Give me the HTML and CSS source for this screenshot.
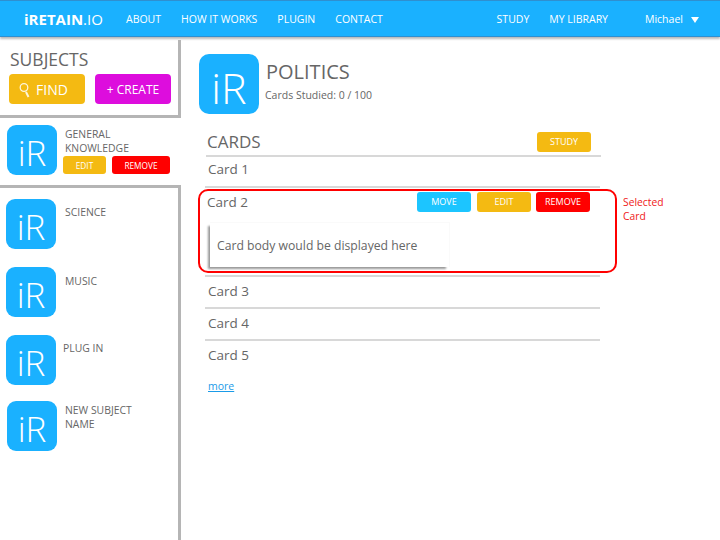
FILE: index.html
```html
<!DOCTYPE html>
<html lang="en">
<head>
    <meta charset="UTF-8">
    <title>iRetain.io</title>
    <link rel="stylesheet" href="styles.css">
</head>
<body>
    <div id="header">
        <div class="brand"><b>iRETAIN</b>.IO</div>
        <a>ABOUT</a>
        <a>HOW IT WORKS</a>
        <a>PLUGIN</a>
        <a>CONTACT</a>
        <a class="push">STUDY</a>
        <a>MY LIBRARY</a>
        <a class="user">Michael <span class="caret"></span></a>
    </div>

    <div id="page">
        <div id="sidebar">
            <div class="side-top">
                <div class="side-title">SUBJECTS</div>
                <div class="side-actions">
                    <div class="btn big yellow find">
                        <svg width="13" height="24" viewBox="0 0 13 24" fill="none" stroke="#fff" stroke-opacity=".85">
                            <circle cx="5" cy="10.5" r="3.8" stroke-width="1.3"/>
                            <path d="M7 15l2.5 5" stroke-width="2"/>
                        </svg>
                        FIND
                    </div>
                    <div class="btn big magenta">+ CREATE</div>
                </div>
            </div>

            <div class="subject current">
                <div class="logo">iR</div>
                <div class="subject-info">
                    <div class="subject-name">GENERAL<br>KNOWLEDGE</div>
                    <div class="subject-btns">
                        <div class="btn tiny yellow edit-s">EDIT</div>
                        <div class="btn tiny red remove-s">REMOVE</div>
                    </div>
                </div>
            </div>

            <div class="side-list">
                <div class="subject"><div class="logo">iR</div><div class="subject-name">SCIENCE</div></div>
                <div class="subject"><div class="logo">iR</div><div class="subject-name">MUSIC</div></div>
                <div class="subject"><div class="logo">iR</div><div class="subject-name">PLUG IN</div></div>
                <div class="subject"><div class="logo">iR</div><div class="subject-name">NEW SUBJECT<br>NAME</div></div>
            </div>
        </div>

        <div id="main">
            <div class="topic">
                <div class="logo large">iR</div>
                <div>
                    <div class="topic-name">POLITICS</div>
                    <div class="topic-stat">Cards Studied: 0 / 100</div>
                </div>
            </div>

            <div class="cards">
                <div class="cards-head">
                    <span>CARDS</span>
                    <div class="btn small yellow">STUDY</div>
                </div>
                <div class="card">Card 1</div>
                <div class="card selected">
                    <div class="card-row">
                        <span>Card 2</span>
                        <div class="card-btns">
                            <div class="btn small blue">MOVE</div>
                            <div class="btn small yellow">EDIT</div>
                            <div class="btn small red">REMOVE</div>
                        </div>
                    </div>
                    <div class="card-body">Card body would be displayed here</div>
                    <div class="note">Selected<br>Card</div>
                </div>
                <div class="card-rule"></div>
                <div class="card">Card 3</div>
                <div class="card">Card 4</div>
                <div class="card">Card 5</div>
                <a class="more">more</a>
            </div>
        </div>
    </div>
</body>
</html>
```

FILE: styles.css
```css
html, body { margin: 0; padding: 0; height: 100%; }
body { font-family: "Open Sans", sans-serif; color: #666; background: #fff; overflow: hidden; display: flex; flex-direction: column; }

#header { height: 35px; flex: none; display: flex; align-items: center; background: #1ab1ff; border-top: 1px solid #2f8fd0; border-bottom: 1px solid #2f8fd0; box-shadow: 0 2px 2px #bbb; color: #fff; padding-left: 24px; font-size: 10.5px; }
#header a { margin-right: 20px; }
#header .push { margin-left: auto; }
#header .user { margin-right: 8px; margin-left: 17px; width: 67px; }
.brand { font-size: 15px; width: 102px; }
.caret { display: inline-block; margin-left: 5px; border-left: 4px solid transparent; border-right: 4px solid transparent; border-top: 6px solid #fff; }

#page { flex: 1; display: flex; min-height: 0; padding-top: 3px; }

#sidebar { width: 181px; flex: none; display: flex; flex-direction: column; }
.side-top { height: 78px; box-sizing: border-box; padding: 8px 0 0 9px; border-right: 3px solid #b5b5b5; border-bottom: 3px solid #b5b5b5; }
.side-title { font-size: 17.5px; line-height: 22px; margin: 0 0 4px 1px; }
.side-actions { display: flex; gap: 10px; }
.side-list { flex: 1; border-top: 3px solid #b5b5b5; border-right: 3px solid #b5b5b5; padding: 11px 0 0 6px; }
.side-list .subject { margin-bottom: 18px; height: 50px; }
.side-list .subject:nth-child(2) .subject-name { margin-top: 7px; }
.side-list .subject:nth-child(3) { margin-bottom: 16px; }
.side-list .subject:nth-child(3) .subject-name { margin-left: 7px; margin-top: 6px; }
.side-list .subject:nth-child(4) { margin-left: 1px; }
.side-list .subject:nth-child(4) .subject-name { margin-left: 8px; margin-top: 2px; }

.subject { display: flex; }
.subject-name { font-size: 10.4px; line-height: 14px; margin-left: 9px; margin-top: 6px; }
.subject.current { height: 67px; box-sizing: border-box; padding: 7px 0 0 7px; }
.subject-info { margin-top: 2px; }
.subject.current .subject-name { margin-top: 0; margin-left: 8px; }
.subject-btns { display: flex; gap: 6px; margin-left: 6px; margin-top: 1px; }

.logo { width: 50px; height: 50px; border-radius: 9px; background: #1ab1ff; color: #fff; font-size: 35px; font-weight: 300; line-height: 56px; text-align: center; flex: none; }
.logo.large { width: 60px; height: 60px; border-radius: 10px; font-size: 43px; line-height: 68px; }

.btn { display: flex; align-items: center; justify-content: center; color: #fff; border-radius: 3px; box-sizing: border-box; }
.yellow { background: #f4ba12; }
.magenta { background: #dd0ddd; }
.red { background: #ff0000; }
.blue { background: #1cc5ff; }
.big { width: 76px; height: 30px; font-size: 12px; border-radius: 4px; }
.find { justify-content: flex-start; padding-left: 10px; font-size: 14px; }
.find svg { margin-right: 4px; }
.small { width: 54px; height: 20px; font-size: 9px; }
.tiny { height: 18px; font-size: 8.3px; }
.edit-s { width: 43px; }
.remove-s { width: 58px; }

#main { flex: 1; padding: 14px 0 0 18px; }
.topic { display: flex; gap: 7px; }
.topic-name { font-size: 20px; line-height: 27px; margin-top: 4px; }
.topic-stat { font-size: 10.5px; line-height: 14px; margin-top: 3px; margin-left: -1px; }

.cards { width: 395px; margin: 14px 0 0 7px; }
.cards-head { display: flex; justify-content: space-between; align-items: flex-end; height: 23px; font-size: 17px; line-height: 24px; border-bottom: 2px solid #d8d8d8; padding: 3px 10px 1px 0; }
.cards-head span { margin-left: 1px; }
.cards-head .btn { margin-bottom: 2px; }

.card { height: 29px; font-size: 13.5px; line-height: 26px; padding-left: 3px; margin: 0 1px 1px -1px; border-bottom: 2px solid #d8d8d8; }
.cards-head + .card { height: 30px; margin-top: -1px; line-height: 26px; }
.card:last-of-type { border-bottom: none; }
.card.selected { position: relative; height: 84px; box-sizing: border-box; width: 419px; margin: 0 0 2px -8px; padding: 0 8px 0 7px; border: 2px solid #ff0000; border-radius: 10px; line-height: 22px; }
.card-rule { height: 2px; background: #d8d8d8; margin: 0 1px 1px -1px; }
.card-row { display: flex; justify-content: space-between; }
.card-btns { display: flex; gap: 6px; margin: 1px 17px 0 0; }
.card-btns .red { margin-left: -1px; }
.card-body { width: 240px; height: 45px; box-sizing: border-box; margin: 9px 0 0 3px; padding-left: 7px; font-size: 12.2px; line-height: 46px; box-shadow: -3px 3px 2px -1px #999; border-top: 1px solid #fafafa; border-right: 1px solid #fafafa; }
.note { position: absolute; left: 423px; top: 4px; color: #f01818; font-size: 10.3px; line-height: 14px; white-space: nowrap; }

.more { display: inline-block; margin: 7px 0 0 2px; font-size: 10.5px; color: #1a9be8; text-decoration: underline; }
```
